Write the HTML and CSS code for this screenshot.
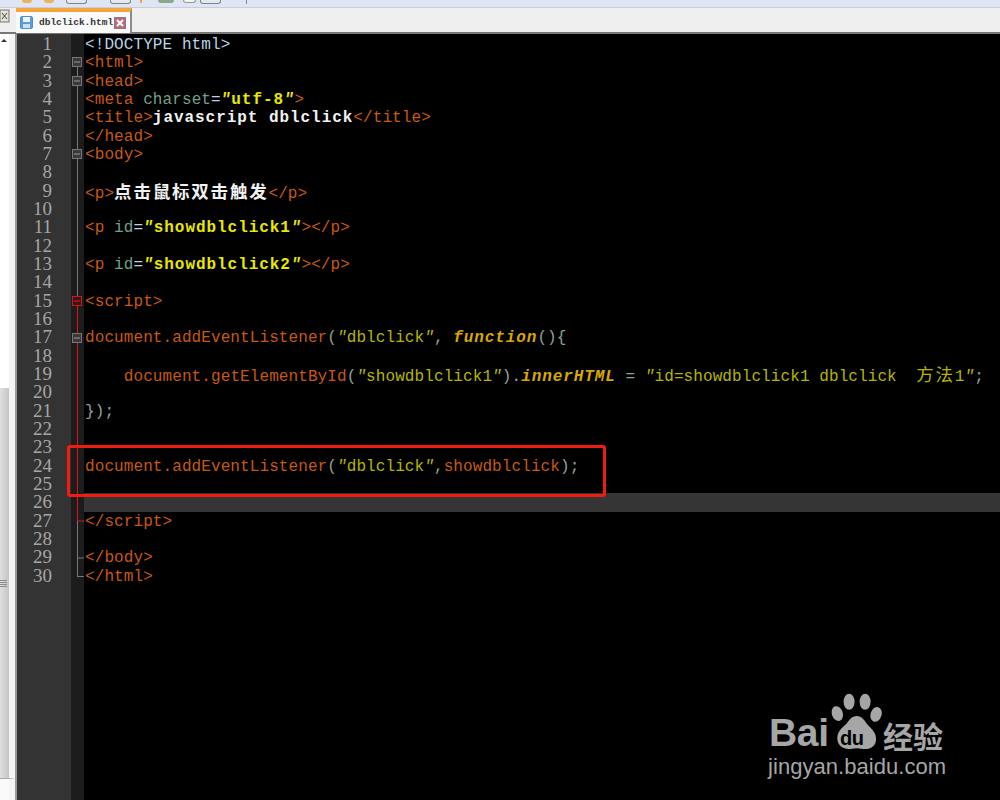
FILE: index.html
```html
<!DOCTYPE html>
<html lang="zh">
<head>
<meta charset="utf-8">
<title>dblclick.html</title>
<link rel="stylesheet" href="styles.css">
</head>
<body>
<div class="app">
  <div class="toolbar">
    <span class="tb tb-o"></span><span class="tb tb-o"></span>
    <span class="tb tb-b"></span><span class="tb tb-b"></span>
    <span class="tb tb-d"></span><span class="tb tb-g"></span><span class="tb tb-w"></span><span class="tb tb-b"></span>
    <span class="tb-sep"></span>
  </div>
  <div class="tabbar">
    <div class="corner"><svg width="10" height="14" viewBox="0 0 10 14"><rect x="0" y="1" width="9" height="12" fill="#e4e0d4" stroke="#777"/><path d="M2 4l5 6M7 4l-5 6" stroke="#444"/></svg></div>
    <div class="tab">
      <svg class="save" width="13" height="13" viewBox="0 0 13 13"><rect width="12" height="12" x=".5" y=".5" rx="1.500" fill="#5a9fdc" stroke="#4f8fd0"/><rect x="3" y="1" width="7" height="5" fill="#eef5fb"/><rect x="3" y="8" width="7" height="4" fill="#cfe0ef"/></svg>
      <span class="tab-name">dblclick.html</span>
      <svg class="close" width="12" height="12" viewBox="0 0 12 12"><rect x=".5" y=".5" width="11" height="11" fill="#bb6a7c" stroke="#8c7a80"/><path d="M3 3l6 6M9 3l-6 6" stroke="#fff" stroke-width="2"/></svg>
    </div>
  </div>
  <div class="main">
    <div class="side">
      <div class="side-top"><span class="arrow"></span></div>
      <div class="thumb"><span class="grip"></span></div>
      <div class="side-bottom"></div>
    </div>
    <div class="editor">
      <div class="gutter"><div>1</div><div>2</div><div>3</div><div>4</div><div>5</div><div>6</div><div>7</div><div>8</div><div>9</div><div>10</div><div>11</div><div>12</div><div>13</div><div>14</div><div>15</div><div>16</div><div>17</div><div>18</div><div>19</div><div>20</div><div>21</div><div>22</div><div>23</div><div>24</div><div>25</div><div>26</div><div>27</div><div>28</div><div>29</div><div>30</div></div>
      <div class="fold">
        <svg width="13" height="766" viewBox="0 0 13 766">
          <path d="M6.500 31V543" stroke="#777" fill="none"/>
          <path d="M6.500 264V487" stroke="#e01414" fill="none"/>
          <path d="M6.500 487H13" stroke="#e01414" fill="none"/>
          <path d="M6.500 524H13M6.500 542.500H13" stroke="#777" fill="none"/>
          <g fill="#3a3a3a" stroke="#777"><rect x="1.500" y="23.500" width="9" height="9"/><rect x="1.500" y="42.500" width="9" height="9"/><rect x="1.500" y="115.500" width="9" height="9"/><rect x="1.500" y="299.500" width="9" height="9"/></g>
          <rect x="1.500" y="262.500" width="9" height="9" fill="#3a1414" stroke="#d01818"/>
          <path d="M3 28h6M3 47h6M3 120h6M3 304h6" stroke="#999"/>
          <path d="M3 267h6" stroke="#e02020"/>
        </svg>
      </div>
      <div class="code">
        <div class="ln"><span class="n">&lt;!DOCTYPE html&gt;</span></div>
        <div class="ln"><span class="o">&lt;html&gt;</span></div>
        <div class="ln"><span class="o">&lt;head&gt;</span></div>
        <div class="ln"><span class="o">&lt;meta</span> <span class="a">charset</span><span class="n">=</span><span class="s"><i>"</i>utf-8<i>"</i></span><span class="o">&gt;</span></div>
        <div class="ln"><span class="o">&lt;title&gt;</span><span class="w">javascript dblclick</span><span class="o">&lt;/title&gt;</span></div>
        <div class="ln"><span class="o">&lt;/head&gt;</span></div>
        <div class="ln"><span class="o">&lt;body&gt;</span></div>
        <div class="ln"></div>
        <div class="ln"><span class="o">&lt;p&gt;</span><span class="w cjk">点击鼠标双击触发</span><span class="o">&lt;/p&gt;</span></div>
        <div class="ln"></div>
        <div class="ln"><span class="o">&lt;p</span> <span class="a">id</span><span class="n">=</span><span class="s"><i>"</i>showdblclick1<i>"</i></span><span class="o">&gt;&lt;/p&gt;</span></div>
        <div class="ln"></div>
        <div class="ln"><span class="o">&lt;p</span> <span class="a">id</span><span class="n">=</span><span class="s"><i>"</i>showdblclick2<i>"</i></span><span class="o">&gt;&lt;/p&gt;</span></div>
        <div class="ln"></div>
        <div class="ln"><span class="o">&lt;script&gt;</span></div>
        <div class="ln"></div>
        <div class="ln"><span class="o">document.addEventListener</span><span class="p">(</span><span class="y"><i>"</i>dblclick<i>"</i></span><span class="p">,</span> <span class="f">function</span><span class="p">(){</span></div>
        <div class="ln"></div>
        <div class="ln">    <span class="o">document.getElementById</span><span class="p">(</span><span class="y"><i>"</i>showdblclick1<i>"</i></span><span class="p">).</span><span class="f">innerHTML</span> <span class="p">=</span> <span class="y"><i>"</i>id=showdblclick1 dblclick  <span class="cjk">方法</span>1<i>"</i></span><span class="p">;</span></div>
        <div class="ln"></div>
        <div class="ln"><span class="p">});</span></div>
        <div class="ln"></div>
        <div class="ln"></div>
        <div class="ln"><span class="o">document.addEventListener</span><span class="p">(</span><span class="y"><i>"</i>dblclick<i>"</i></span><span class="p">,</span><span class="o">showdblclick</span><span class="p">);</span></div>
        <div class="ln"></div>
        <div class="ln current"></div>
        <div class="ln"><span class="o">&lt;/script&gt;</span></div>
        <div class="ln"></div>
        <div class="ln"><span class="o">&lt;/body&gt;</span></div>
        <div class="ln"><span class="o">&lt;/html&gt;</span></div>
      </div>
    </div>
  </div>
  <div class="callout"></div>
  <div class="mark">
    <svg class="paw" width="54" height="58" viewBox="0 0 64 68">
      <ellipse cx="11" cy="24" rx="6.500" ry="9" fill="#a6a6a6" transform="rotate(-18 11 24)"/>
      <ellipse cx="25" cy="10" rx="6.500" ry="9.500" fill="#a6a6a6"/>
      <ellipse cx="44" cy="10" rx="6.500" ry="9.500" fill="#a6a6a6"/>
      <ellipse cx="57" cy="25" rx="6.500" ry="9" fill="#a6a6a6" transform="rotate(18 57 25)"/>
      <path d="M34 27c-6 0-9 5-12 9-3 3-11 8-11 17 0 9 7 13 13 13 4 0 6-1 10-1s6 1 10 1c7 0 13-4 13-12 0-9-8-14-11-18-3-4-6-9-12-9z" fill="#a6a6a6"/>
    </svg>
    <span class="bai">Bai</span>
    <span class="du">du</span>
    <span class="jy">经验</span>
    <div class="url">jingyan.baidu.com</div>
  </div>
</div>
</body>
</html>
```
FILE: styles.css
```css
* { box-sizing: border-box; }
html, body { margin: 0; height: 100%; background: #000; overflow: hidden; }
.app { position: relative; width: 1000px; height: 800px; display: flex; flex-direction: column; overflow: hidden; }

.toolbar { height: 8px; flex: none; background: #dfe5f3; border-bottom: 1px solid #c9cede; display: flex; align-items: flex-start; }
.tb { display: block; height: 3px; flex: none; border-radius: 0 0 3px 3px; }
.tb-o { width: 10px; margin-left: 12px; background: #e8b45c; }
.tb-o:first-child { margin-left: 22px; }
.tb-b { width: 21px; height: 4px; margin-left: 12px; background: #e6e8f0; border: 1px solid #7d8494; border-top: 0; }
.tb-b + .tb-b { margin-left: 23px; }
.tb-d { width: 2px; margin-left: 9px; background: #f0a030; }
.tb-g { width: 16px; margin-left: 16px; background: #8aa88a; }
.tb-w { width: 13px; margin-left: 9px; background: #f4f4f4; border: 1px solid #999; border-top: 0; }
.tb-w + .tb-b { margin-left: 4px; }
.tb-sep { width: 1px; height: 4px; background: #888; margin-left: 25px; }

.tabbar { height: 26px; flex: none; background: #efefef; display: flex; border-bottom: 2px solid #777; }
.corner { width: 16px; flex: none; padding-top: 1px; }
.tab { width: 116px; height: 25px; flex: none; background: #fafafa; border-top: 4px solid #f5a53c; border-right: 2px solid #8a8a8a; display: flex; align-items: center; padding-left: 4px; }
.save { flex: none; }
.tab-name { font: 700 9.500px/1 "Liberation Mono", monospace; color: #333; margin-left: 6px; white-space: nowrap; }
.close { flex: none; margin-left: 1px; }

.main { flex: 1; display: flex; min-height: 0; }
.side { width: 17px; flex: none; display: flex; flex-direction: column; background: #fff; border-right: 2px solid #9a9a9a; }
.side-top { height: 354px; flex: none; background: #fff; border-right: 6px solid #f4f4f4; padding-top: 2px; }
.arrow { display: block; width: 0; height: 0; border: 3px solid transparent; border-bottom-color: #333; margin-left: 1px; }
.thumb { height: 391px; flex: none; background: linear-gradient(90deg, #e0e0e0, #c4c4c4); border-right: 6px solid #f4f4f4; border-bottom: 1px solid #aaa; display: flex; align-items: center; }
.grip { display: block; width: 7px; height: 7px; background: repeating-linear-gradient(180deg, #8c8c8c 0 1px, transparent 1px 2px); }
.side-bottom { flex: 1; background: #fafafa; border-right: 6px solid #f4f4f4; }

.editor { flex: 1; display: flex; min-width: 0; padding-top: 1px; background: linear-gradient(90deg, #333 54px, #1c1c1c 54px, #1c1c1c 67px, #000 67px); }
.gutter { width: 54px; flex: none; color: #a6a6a6; font: 19px/18.340px "Liberation Serif", serif; text-align: right; padding-right: 19px; }
.gutter div { height: 18.340px; }
.fold { width: 13px; flex: none; margin-top: -1px; }
.fold svg { display: block; }
.code { flex: 1; min-width: 0; font: 16px/20.340px "Liberation Mono", monospace; letter-spacing: .09px; color: #ddd; }
.ln { height: 18.340px; padding-left: 1px; white-space: pre; }
.current { background: #353535; }
.n { color: #b9d4e6; }
.o { color: #c65a10; }
.a { color: #6fa08a; }
.s { color: #e8e800; font-weight: 700; letter-spacing: .95px; }
.y { color: #b5b500; }
.w { color: #f2f2f2; font-weight: 700; letter-spacing: .95px; }
.f { color: #d9a800; font-style: italic; font-weight: 700; letter-spacing: .9px; }
.p { color: #8fa29a; }
.cjk { font: 17.500px/1 "Noto Sans CJK SC", sans-serif; letter-spacing: 1.800px; }
.w.cjk { font-weight: 700; }

.callout { position: absolute; left: 67px; top: 445px; width: 539px; height: 52px; border: 3px solid #f01c14; border-radius: 3px; }

.mark { position: absolute; left: 768px; top: 692px; width: 190px; height: 90px; color: #a6a6a6; font-family: "Liberation Sans", sans-serif; }
.paw { position: absolute; left: 60px; top: 1px; }
.bai { position: absolute; left: 1px; top: 22px; font-size: 39px; font-weight: 700; line-height: 38px; letter-spacing: -.3px; }
.du { position: absolute; left: 72px; top: 36px; font-size: 20px; font-weight: 700; line-height: 20px; color: #000; letter-spacing: -.5px; }
.jy { position: absolute; left: 115px; top: 26px; font: 700 30px/34px "Noto Sans CJK SC", sans-serif; white-space: nowrap; }
.url { position: absolute; left: 0; top: 62px; font-size: 22px; line-height: 26px; letter-spacing: .05px; white-space: nowrap; }
```
